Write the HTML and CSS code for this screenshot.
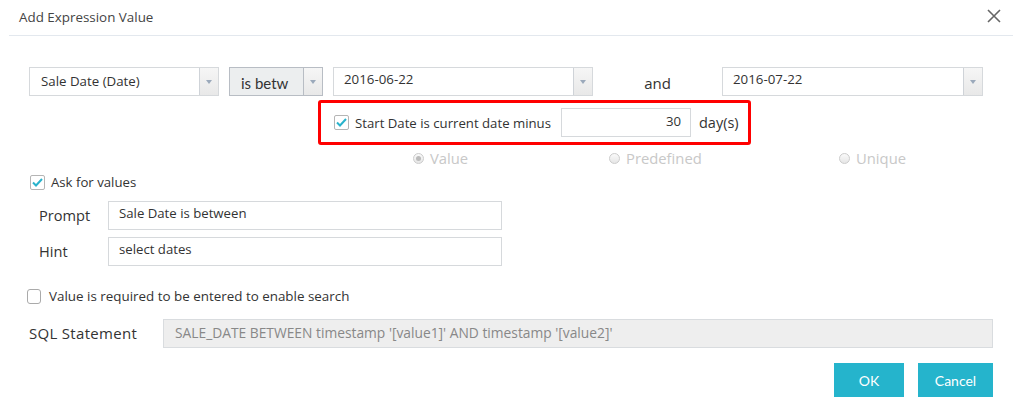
FILE: index.html
```html
<!DOCTYPE html>
<html>
<head>
<meta charset="utf-8">
<link rel="stylesheet" href="styles.css">
</head>
<body>
<div class="dialog">
  <div class="header">
    <span class="title">Add Expression Value</span>
    <svg class="close" width="14" height="14" viewBox="0 0 14 14"><path d="M1 1L13 13M13 1L1 13" stroke="#666" stroke-width="1.6" fill="none"/></svg>
  </div>

  <div class="row-cond">
    <div class="combo combo-field"><span class="combo-text">Sale Date (Date)</span><span class="combo-btn"><i class="tri"></i></span></div>
    <div class="combo combo-op"><span class="combo-text op-text">is betw</span><span class="combo-btn"><i class="tri"></i></span></div>
    <div class="combo combo-date"><span class="combo-text">2016-06-22</span><span class="combo-btn"><i class="tri"></i></span></div>
    <div class="and">and</div>
    <div class="combo combo-date2"><span class="combo-text">2016-07-22</span><span class="combo-btn"><i class="tri"></i></span></div>
  </div>

  <div class="highlight">
    <span class="chk checked"><svg width="11" height="9" viewBox="0 0 11 9"><path d="M1 4.5L4 7.5L10 1" stroke="#29b3cc" stroke-width="2" fill="none"/></svg></span>
    <span class="hl-label">Start Date is current date minus</span>
    <div class="num-input">30</div>
    <span class="days">day(s)</span>
  </div>

  <div class="radios">
    <span class="radio r-value"><i class="rdot on"></i>Value</span>
    <span class="radio r-pre"><i class="rdot"></i>Predefined</span>
    <span class="radio r-uni"><i class="rdot"></i>Unique</span>
  </div>

  <div class="ask">
    <span class="chk checked"><svg width="11" height="9" viewBox="0 0 11 9"><path d="M1 4.5L4 7.5L10 1" stroke="#29b3cc" stroke-width="2" fill="none"/></svg></span>
    <span>Ask for values</span>
  </div>

  <div class="field-row">
    <span class="flabel">Prompt</span>
    <div class="text-input">Sale Date is between</div>
  </div>
  <div class="field-row hint-row">
    <span class="flabel">Hint</span>
    <div class="text-input">select dates</div>
  </div>

  <div class="required">
    <span class="chk plain"></span>
    <span>Value is required to be entered to enable search</span>
  </div>

  <div class="sql-row">
    <span class="sql-label">SQL Statement</span>
    <div class="sql-input">SALE_DATE BETWEEN timestamp '[value1]' AND timestamp '[value2]'</div>
  </div>

  <div class="buttons">
    <button class="btn">OK</button>
    <button class="btn btn-cancel">Cancel</button>
  </div>
</div>
</body>
</html>
```

FILE: styles.css
```css
html, body {
  margin: 0;
  padding: 0;
  background: #fff;
}
body {
  font-family: "Open Sans", "Noto Sans", sans-serif;
  color: #333;
  font-size: 13.2px;
  width: 1019px;
  height: 412px;
  overflow: hidden;
}
.dialog {
  position: relative;
  width: 1019px;
  height: 412px;
}
.header {
  margin: 0 6px 0 9px;
  height: 36px;
  border-bottom: 1px solid #e3e8ee;
  display: flex;
  align-items: center;
  justify-content: space-between;
  box-sizing: border-box;
  padding: 0 12px 2px 10px;
}
.title {
  font-size: 13.4px;
  color: #444;
}
.close {
  margin-top: -2px;
}

.row-cond {
  display: flex;
  align-items: center;
  margin: 31px 0 0 29px;
  height: 29px;
}
.combo {
  display: flex;
  height: 29px;
  box-sizing: border-box;
  border: 1px solid #d6d9dc;
  background: #fff;
}
.combo-text {
  flex: 1;
  padding: 4px 0 0 11px;
  font-size: 13.3px;
  color: #333;
  white-space: nowrap;
  overflow: hidden;
}
.combo-btn {
  width: 18px;
  border-left: 1px solid #cfd3d8;
  background: linear-gradient(#f6f6f6, #e8e8e8);
  display: flex;
  align-items: center;
  justify-content: center;
}
.tri {
  width: 0;
  height: 0;
  border-left: 3.5px solid transparent;
  border-right: 3.5px solid transparent;
  border-top: 4px solid #9ba9bb;
  margin-top: 1px;
}
.combo-field { width: 190px; }
.combo-op {
  width: 94px;
  margin-left: 10px;
  background: #eceeef;
  border-color: #b8bdc4;
}
.op-text {
  font-family: Lato, sans-serif;
  font-size: 15px;
  padding: 6px 0 0 11px;
  color: #333;
}
.combo-op .combo-btn { border-left-color: #b8bdc4; }
.combo-date { width: 260px; margin-left: 10px; }
.combo-date .combo-text, .combo-date2 .combo-text { padding-top: 2px; padding-left: 10px; }
.and {
  width: 129px;
  text-align: center;
  font-size: 15px;
  padding-top: 2px;
  color: #333;
}
.combo-date2 { width: 261px; }

.highlight {
  margin: 4px 0 0 318px;
  width: 433px;
  height: 45px;
  box-sizing: border-box;
  border: 3px solid #f00;
  border-radius: 3px;
  display: flex;
  align-items: center;
  padding-left: 13px;
}
.chk {
  width: 15px;
  height: 15px;
  box-sizing: border-box;
  border: 1px solid #b5b5b5;
  border-radius: 2px;
  display: inline-flex;
  align-items: center;
  justify-content: center;
  background: #fff;
  flex: none;
}
.hl-label {
  margin-left: 6px;
  font-size: 13.2px;
  color: #333;
}
.num-input {
  margin-left: 10px;
  width: 130px;
  height: 29px;
  box-sizing: border-box;
  border: 1px solid #d6d9dc;
  text-align: right;
  padding: 3px 9px 0 0;
  font-size: 13.2px;
}
.days {
  margin-left: 8px;
  font-size: 14.5px;
  color: #333;
}

.radios {
  position: relative;
  height: 24px;
  margin-top: 2px;
  font-size: 14.8px;
  color: #c8c8c8;
}
.radio {
  position: absolute;
  top: 1px;
  display: flex;
  align-items: center;
}
.r-value { left: 413px; }
.r-pre { left: 609px; }
.r-uni { left: 839px; }
.rdot {
  width: 11px;
  height: 11px;
  box-sizing: border-box;
  border: 1px solid #ccc;
  border-radius: 50%;
  background: linear-gradient(#fafafa, #e6e6e6);
  margin-right: 6px;
  display: inline-flex;
  align-items: center;
  justify-content: center;
}
.rdot.on::after {
  content: "";
  width: 5px;
  height: 5px;
  border-radius: 50%;
  background: #bbb;
}

.ask {
  margin: 2px 0 0 30px;
  display: flex;
  align-items: center;
  font-size: 13.2px;
  color: #333;
}
.ask span:last-child { margin-left: 6px; }

.field-row {
  display: flex;
  align-items: center;
  margin: 10px 0 0 39px;
}
.hint-row { margin-top: 7px; }
.flabel {
  width: 69px;
  font-size: 14.6px;
  color: #333;
  padding-bottom: 2px;
}
.text-input {
  width: 394px;
  height: 29px;
  box-sizing: border-box;
  border: 1px solid #d6d9dc;
  padding: 2px 0 0 10px;
  font-size: 13.2px;
  color: #333;
}

.required {
  margin: 21px 0 0 27px;
  display: flex;
  align-items: center;
  font-size: 13.4px;
  color: #333;
}
.chk.plain {
  width: 14px;
  height: 15px;
  border-color: #aaa;
  border-radius: 3px;
}
.required span:last-child { margin-left: 8px; }

.sql-row {
  display: flex;
  align-items: center;
  margin: 14px 0 0 29px;
}
.sql-label {
  width: 134px;
  font-size: 15px;
  letter-spacing: 0.3px;
  color: #333;
  padding-bottom: 2px;
}
.sql-input {
  width: 830px;
  height: 29px;
  box-sizing: border-box;
  border: 1px solid #d9dcdf;
  background: #eeeeee;
  color: #888;
  font-size: 13.8px;
  padding: 3px 0 0 11px;
}

.buttons {
  display: flex;
  justify-content: flex-end;
  margin: 15px 26px 0 0;
  gap: 14px;
}
.btn {
  height: 34px;
  width: 70px;
  border: none;
  background: #25b4cc;
  color: #fff;
  font-family: Lato, "Noto Sans", sans-serif;
  font-size: 14px;
  padding: 0;
}
.btn-cancel { width: 75px; }
```
